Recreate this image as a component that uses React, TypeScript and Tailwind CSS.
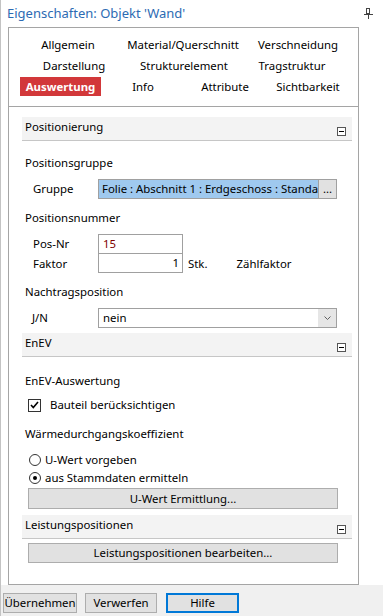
import React from 'react';

function PinIcon() {
  return (
    <svg width="9" height="11" viewBox="0 0 9 11" className="text-[#444]">
      <rect x="2.5" y="0.5" width="3" height="5" fill="none" stroke="currentColor" />
      <line x1="5.5" y1="0.5" x2="5.5" y2="5.5" stroke="currentColor" strokeWidth="1" />
      <line x1="0" y1="6.5" x2="9" y2="6.5" stroke="currentColor" />
      <line x1="4.5" y1="7" x2="4.5" y2="11" stroke="currentColor" />
    </svg>
  );
}

function MinusBox() {
  return (
    <div className="w-[9px] h-[9px] border border-[#555] bg-white flex items-center justify-center">
      <div className="w-[5px] h-[1px] bg-black" />
    </div>
  );
}

function SectionHeader({ title }: { title: string }) {
  return (
    <div className="h-[24px] bg-[#f3f3f3] border-b border-[#c6c6c6] flex justify-between pl-[3px] pr-[6px]">
      <span className="leading-[20px]">{title}</span>
      <div className="self-end mb-[4px]">
        <MinusBox />
      </div>
    </div>
  );
}

function Label({ children, className = '' }: { children: React.ReactNode; className?: string }) {
  return <div className={`h-[20px] flex items-center pl-[3px] ${className}`}>{children}</div>;
}

function Tab({ label, w, ml, active = false }: { label: string; w: string; ml: string; active?: boolean }) {
  return (
    <div className={`${w} ${ml} h-[21px] flex items-center justify-center whitespace-nowrap`}>
      {active ? (
        <span className="bg-[#d2383a] text-white font-bold w-[81px] h-[19px] flex items-center justify-center">
          {label}
        </span>
      ) : (
        <span>{label}</span>
      )}
    </div>
  );
}

function Button({ label, className = '' }: { label: string; className?: string }) {
  return (
    <div className={`bg-[#e1e1e1] border border-[#adadad] flex items-center justify-center whitespace-nowrap ${className}`}>
      {label}
    </div>
  );
}

export default function App() {
  return (
    <div className="w-[383px] h-[616px] bg-white border-l border-[#c3c3c3] flex flex-col font-['Noto_Sans',sans-serif] text-[11.4px] text-black overflow-hidden">
      {/* Title */}
      <div className="h-[27px] flex items-center justify-between pl-[6px] pr-[10px] shrink-0">
        <span className="text-[13px] text-[#2d6bb3] leading-none">Eigenschaften: Objekt 'Wand'</span>
        <PinIcon />
      </div>

      {/* Panel */}
      <div className="ml-[7px] w-[351px] h-[558px] border border-[#a5a5a5] flex flex-col shrink-0">
        {/* Tabs */}
        <div className="h-[78px] pt-[6px] flex flex-col shrink-0">
          <div className="flex">
            <Tab label="Allgemein" w="w-[110px]" ml="ml-[4px]" />
            <Tab label="Material/Querschnitt" w="w-[110px]" ml="ml-[5px]" />
            <Tab label="Verschneidung" w="w-[110px]" ml="ml-[5px]" />
          </div>
          <div className="flex">
            <Tab label="Darstellung" w="w-[100px]" ml="ml-[15px]" />
            <Tab label="Strukturelement" w="w-[100px]" ml="ml-[10px]" />
            <Tab label="Tragstruktur" w="w-[100px]" ml="ml-[8px]" />
          </div>
          <div className="flex">
            <Tab label="Auswertung" w="w-[81px]" ml="ml-[11px]" active />
            <Tab label="Info" w="w-[80px]" ml="ml-[2px]" />
            <Tab label="Attribute" w="w-[80px]" ml="ml-[2px]" />
            <Tab label="Sichtbarkeit" w="w-[80px]" ml="ml-[3px]" />
          </div>
        </div>

        {/* Content */}
        <div className="border-t border-[#a5a5a5] flex-1 pl-[13px] pr-[6px] pt-[10px] flex flex-col">
          <SectionHeader title="Positionierung" />

          <Label className="mt-[12px]">Positionsgruppe</Label>
          <div className="mt-[6px] flex items-center">
            <div className="w-[76px] pl-[11px]">Gruppe</div>
            <div className="w-[239px] h-[20px] border border-[#a0a0a0] flex">
              <div className="w-[219px] bg-[#9fc9ef] pl-[3px] overflow-hidden whitespace-nowrap leading-[18px]">
                Folie : Abschnitt 1 : Erdgeschoss : Standa
              </div>
              <div className="w-[18px] bg-[#e1e1e1] border-l border-[#a0a0a0] flex items-center justify-center leading-[14px]">
                ...
              </div>
            </div>
          </div>

          <Label className="mt-[9px]">Positionsnummer</Label>
          <div className="mt-[6px] flex">
            <div className="w-[76px] pl-[11px] flex flex-col">
              <div className="h-[20px] flex items-center">Pos-Nr</div>
              <div className="h-[19px] flex items-center">Faktor</div>
            </div>
            <div className="w-[85px] flex flex-col">
              <div className="h-[20px] border border-[#a0a0a0] text-[#800000] pl-[4px] flex items-center">15</div>
              <div className="h-[19px] border border-t-0 border-[#a0a0a0] pr-[3px] flex items-center justify-end">1</div>
            </div>
            <div className="flex flex-col">
              <div className="h-[20px]" />
              <div className="h-[19px] flex items-center">
                <span className="ml-[5px]">Stk.</span>
                <span className="ml-[29px]">Zählfaktor</span>
              </div>
            </div>
          </div>

          <Label className="mt-[9px]">Nachtragsposition</Label>
          <div className="mt-[6px] flex items-center">
            <div className="w-[76px] pl-[10px]">J/N</div>
            <div className="w-[239px] h-[20px] border border-[#a0a0a0] flex">
              <div className="flex-1 pl-[4px] leading-[18px]">nein</div>
              <div className="w-[18px] bg-[#e6e6e6] flex items-center justify-center">
                <svg width="7" height="4" viewBox="0 0 7 4">
                  <polyline points="0.5,0.5 3.5,3.5 6.5,0.5" fill="none" stroke="#606060" strokeWidth="1" />
                </svg>
              </div>
            </div>
          </div>

          <div className="mt-[5px]">
            <SectionHeader title="EnEV" />
          </div>

          <Label className="mt-[14px]">EnEV-Auswertung</Label>
          <div className="mt-[5px] h-[18px] flex items-center pl-[6px]">
            <div className="w-[13px] h-[13px] border border-[#333] flex items-center justify-center">
              <svg width="9" height="8" viewBox="0 0 9 8">
                <polyline points="1,4 3.3,6.5 8,1" fill="none" stroke="#000" strokeWidth="1.6" />
              </svg>
            </div>
            <span className="ml-[9px]">Bauteil berücksichtigen</span>
          </div>

          <Label className="mt-[10px]">Wärmedurchgangskoeffizient</Label>
          <div className="mt-[7px] h-[18px] flex items-center pl-[7px]">
            <div className="w-[12px] h-[12px] rounded-full border border-[#333]" />
            <span className="ml-[4px]">U-Wert vorgeben</span>
          </div>
          <div className="h-[18px] flex items-center pl-[7px]">
            <div className="w-[12px] h-[12px] rounded-full border border-[#333] flex items-center justify-center">
              <div className="w-[4px] h-[4px] rounded-full bg-black" />
            </div>
            <span className="ml-[4px]">aus Stammdaten ermitteln</span>
          </div>

          <Button label="U-Wert Ermittlung..." className="mt-[1px] ml-[6px] w-[310px] h-[21px]" />

          <div className="mt-[6px]">
            <SectionHeader title="Leistungspositionen" />
          </div>

          <Button label="Leistungspositionen bearbeiten..." className="mt-[4px] ml-[6px] w-[310px] h-[20px]" />
        </div>
      </div>

      {/* Bottom buttons */}
      <div className="flex-1 bg-[#f0f0f0] pt-[8px] pl-[2px] flex items-start">
        <Button label="Übernehmen" className="w-[74px] h-[20px]" />
        <Button label="Verwerfen" className="ml-[8px] w-[72px] h-[20px]" />
        <div className="ml-[9px] w-[73px] h-[20px] bg-[#e1e1e1] border-2 border-[#0078d7] flex items-center justify-center">
          Hilfe
        </div>
      </div>
    </div>
  );
}
